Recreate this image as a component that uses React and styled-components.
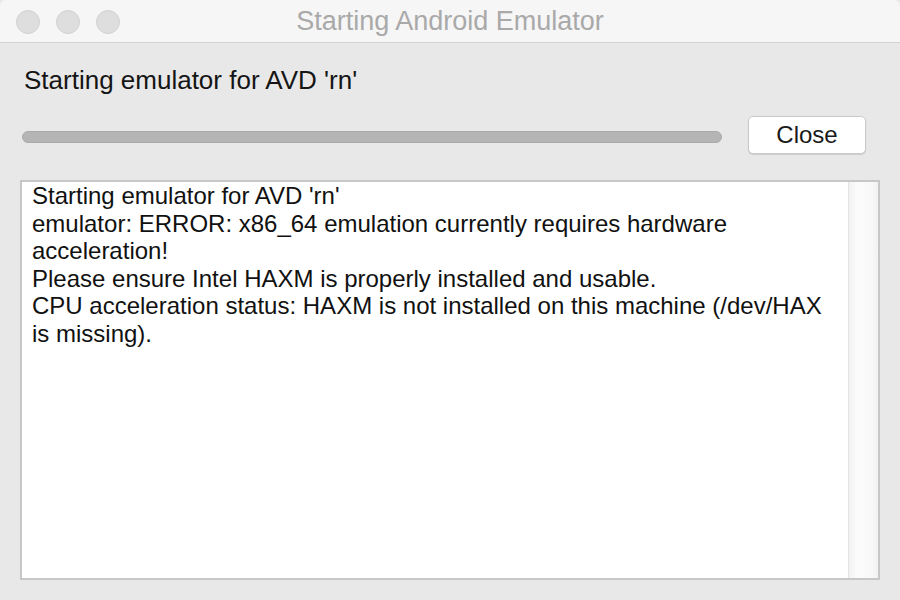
import React from "react";
import styled, { createGlobalStyle } from "styled-components";

const Global = createGlobalStyle`
  html, body { margin: 0; padding: 0; background: #e8e8e8; }
  body { font-family: "Liberation Sans", Arial, sans-serif; }
  * { box-sizing: border-box; }
`;

const Window = styled.div`
  width: 900px;
  height: 600px;
  display: flex;
  flex-direction: column;
  background: #e8e8e8;
  border-radius: 6px;
  overflow: hidden;
`;

const TitleBar = styled.div`
  position: relative;
  height: 43px;
  flex: none;
  display: flex;
  align-items: center;
  justify-content: center;
  background: #f6f6f6;
  border-bottom: 1px solid #d2d2d2;
`;

const Lights = styled.div`
  position: absolute;
  left: 16px;
  top: 10px;
  display: flex;
  gap: 16px;
`;

const Light = styled.span`
  width: 24px;
  height: 24px;
  border-radius: 50%;
  background: #dedede;
  border: 1px solid #d2d2d2;
`;

const Title = styled.div`
  font-size: 27px;
  color: #a9a9a9;
  line-height: 30px;
  margin-top: -1px;
`;

const Body = styled.div`
  flex: 1;
  display: flex;
  flex-direction: column;
  padding: 22px 20px 20px 20px;
  min-height: 0;
`;

const Label = styled.div`
  font-size: 26px;
  line-height: 30px;
  color: #151515;
  padding-left: 4px;
`;

const ProgressRow = styled.div`
  display: flex;
  align-items: center;
  gap: 26px;
  margin-top: 21px;
  padding: 0 14px 0 2px;
`;

const Bar = styled.div`
  flex: 1;
  height: 12px;
  margin-top: 4px;
  border-radius: 6px;
  background: #b5b5b5;
  border: 1px solid #aaaaaa;
`;

const Button = styled.button`
  width: 118px;
  height: 38px;
  flex: none;
  border-radius: 5px;
  background: #ffffff;
  border: 1px solid #c9c9c9;
  box-shadow: 0 1px 1px rgba(0, 0, 0, 0.12);
  font-family: "Liberation Sans", Arial, sans-serif;
  font-size: 24px;
  color: #1a1a1a;
  padding: 0;
  line-height: 36px;
`;

const Output = styled.div`
  flex: 1;
  margin-top: 26px;
  display: flex;
  background: #ffffff;
  border: 2px solid #c7c7c7;
  min-height: 0;
`;

const OutputText = styled.div`
  flex: 1;
  padding: 0 20px 0 10px;
  font-size: 24px;
  line-height: 27.5px;
  color: #111111;
  white-space: pre-wrap;
`;

const ScrollTrack = styled.div`
  width: 30px;
  flex: none;
  border-left: 1px solid #e4e4e4;
  background: linear-gradient(to right, #f2f2f2, #fbfbfb 30%, #f8f8f8 80%, #f1f1f1);
`;

const lines = [
  "Starting emulator for AVD 'rn'",
  "emulator: ERROR: x86_64 emulation currently requires hardware acceleration!",
  "Please ensure Intel HAXM is properly installed and usable.",
  "CPU acceleration status: HAXM is not installed on this machine (/dev/HAX is missing).",
];

export default function App() {
  return (
    <>
      <Global />
      <Window>
        <TitleBar>
          <Lights>
            <Light />
            <Light />
            <Light />
          </Lights>
          <Title>Starting Android Emulator</Title>
        </TitleBar>
        <Body>
          <Label>Starting emulator for AVD 'rn'</Label>
          <ProgressRow>
            <Bar />
            <Button>Close</Button>
          </ProgressRow>
          <Output>
            <OutputText>{lines.join("\n")}</OutputText>
            <ScrollTrack />
          </Output>
        </Body>
      </Window>
    </>
  );
}
